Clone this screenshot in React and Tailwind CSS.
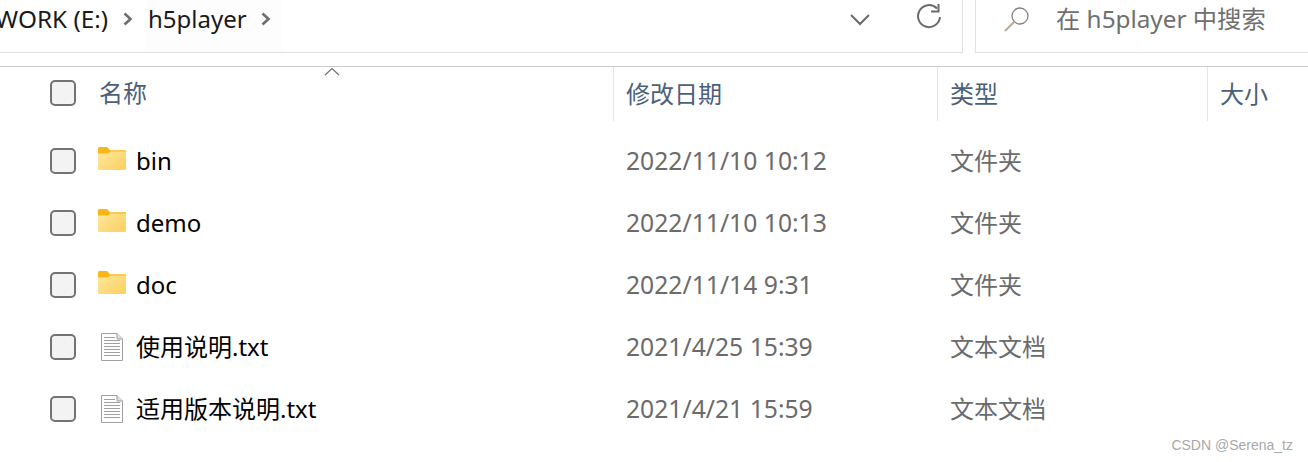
const FONT = "font-['Noto_Sans','Noto_Sans_CJK_SC',sans-serif]";

function Folder() {
  return (
    <svg width="28" height="24" viewBox="0 0 28 24" className="shrink-0">
      <defs>
        <linearGradient id="fg" x1="0" y1="0" x2="1" y2="1">
          <stop offset="0" stopColor="#ffeaa6" />
          <stop offset="1" stopColor="#fccf5c" />
        </linearGradient>
      </defs>
      <path d="M0 1.5A1.5 1.5 0 0 1 1.5 0H9l3 3H26.5A1.5 1.5 0 0 1 28 4.5V21.5A1.5 1.5 0 0 1 26.5 23H1.5A1.5 1.5 0 0 1 0 21.5Z" fill="url(#fg)" />
      <path d="M0 1.5A1.5 1.5 0 0 1 1.5 0H9l3 3.5H28V4.5L13 4.5 9.5 6.5H0Z" fill="#f7b719" />
    </svg>
  );
}

function Doc() {
  return (
    <svg width="22" height="28" viewBox="0 0 22 28" className="shrink-0">
      <path d="M.5.5H16L21.5 6V27.5H.5Z" fill="#fdfdfd" stroke="#a0a0a0" />
      <path d="M16 .5V6H21.5" fill="#e0e0e0" stroke="#a0a0a0" />
      <path d="M3 4.5H14M3 7.5H19M3 10.5H19M3 13.5H19M3 16.5H19M3 19.5H19M3 22.5H19" stroke="#a0a0a0" strokeWidth="1" />
    </svg>
  );
}

function Check() {
  return <div className="w-[26px] h-[26px] shrink-0 rounded-[5px] border-2 border-[#737373] bg-[#f3f3f3]" />;
}

function Chevron() {
  return (
    <svg width="10" height="14" viewBox="0 0 10 14" className="shrink-0">
      <path d="M1.5 1.5 7.5 7 1.5 12.5" fill="none" stroke="#6e6e6e" strokeWidth="2.6" />
    </svg>
  );
}

const rows = [
  ["bin", "2022/11/10 10:12", "文件夹", "f"],
  ["demo", "2022/11/10 10:13", "文件夹", "f"],
  ["doc", "2022/11/14 9:31", "文件夹", "f"],
  ["使用说明.txt", "2021/4/25 15:39", "文本文档", "d"],
  ["适用版本说明.txt", "2021/4/21 15:59", "文本文档", "d"],
];

export default function App() {
  return (
    <div className={`${FONT} w-[1308px] h-[462px] bg-white overflow-hidden relative text-[24px]`}>
      <div className="flex h-[53px]">
        <div className="w-[963px] shrink-0 flex border-b border-r border-[#e0e0e0] overflow-hidden">
          <div className="w-[145px] shrink-0 flex items-center justify-end text-[#1a1a1a] whitespace-nowrap pb-[14px] pr-[12px] gap-[15px] text-[24.3px]">
            <span>WORK (E:)</span>
            <Chevron />
          </div>
          <div className="w-[137px] shrink-0 flex items-center bg-[#fdfdfe] text-[#1a1a1a] pb-[14px] pl-[3px] gap-[14px]">
            <span>h5player</span>
            <Chevron />
          </div>
          <div className="flex-1 flex items-start justify-end pt-[4px] pr-[20px] gap-[45px]">
            <svg width="22" height="34" viewBox="0 0 22 34">
              <path d="M2 11 11 20 20 11" fill="none" stroke="#6a6a6a" strokeWidth="2" />
            </svg>
            <svg width="26" height="30" viewBox="0 0 26 30">
              <path d="M21 4.5A11 11 0 1 0 24 13" fill="none" stroke="#6a6a6a" strokeWidth="2" />
              <path d="M22.5 0V7.5H15" fill="none" stroke="#6a6a6a" strokeWidth="2" />
            </svg>
          </div>
        </div>
        <div className="w-[12px] shrink-0" />
        <div className="flex-1 flex items-start border-l border-b border-[#e0e0e0] pl-[28px] text-[#6f6f6f] whitespace-nowrap">
          <svg width="26" height="26" viewBox="0 0 26 26" className="mt-[6px] shrink-0">
            <circle cx="16" cy="10" r="8" fill="none" stroke="#808080" strokeWidth="1.3" />
            <path d="M10 16 1 25" stroke="#b8a594" strokeWidth="1.8" />
          </svg>
          <span className="ml-[26px] text-[24.3px] leading-[38px]">在 h5player 中搜索</span>
        </div>
      </div>
      <div className="h-[13px]" />
      <div className="h-[55px] border-t border-[#c8c8c8] flex relative text-[#4c607a]">
        <svg width="16" height="10" viewBox="0 0 16 10" className="absolute left-[324px] top-0">
          <path d="M1 8 8 1.5 15 8" fill="none" stroke="#707070" strokeWidth="1.2" />
        </svg>
        <div className="w-[613px] shrink-0 flex items-center pl-[50px] gap-[23px] pb-[2px]">
          <Check />
          <span>名称</span>
        </div>
        <div className="w-[324px] shrink-0 flex items-center pl-[12px] border-l border-[#e5e5e5]"><span>修改日期</span></div>
        <div className="w-[270px] shrink-0 flex items-center pl-[12px] border-l border-[#e5e5e5]"><span>类型</span></div>
        <div className="flex-1 flex items-center pl-[12px] border-l border-[#e5e5e5]"><span>大小</span></div>
      </div>
      <div className="pt-[9px]">
        {rows.map(([name, date, type, kind]) => (
          <div key={name} className="h-[62px] flex items-center">
            <div className="w-[614px] shrink-0 flex items-center pl-[50px] whitespace-nowrap">
              <Check />
              <div className="w-[60px] shrink-0 flex justify-end pr-[10px]">
                {kind === "f" ? <div className="-mt-[5px]"><Folder /></div> : <div className="mr-[3px]"><Doc /></div>}
              </div>
              <span className="text-black">{name}</span>
            </div>
            <div className="w-[324px] shrink-0 pl-[12px] text-[#6b6b6b] text-[24.7px]">{date}</div>
            <div className="pl-[12px] text-[#6b6b6b]">{type}</div>
          </div>
        ))}
      </div>
      <div className="absolute right-[15px] bottom-[8px] text-[14px] leading-[18px] text-[#a8a8a8] font-['Liberation_Sans',sans-serif]">CSDN @Serena_tz</div>
    </div>
  );
}
